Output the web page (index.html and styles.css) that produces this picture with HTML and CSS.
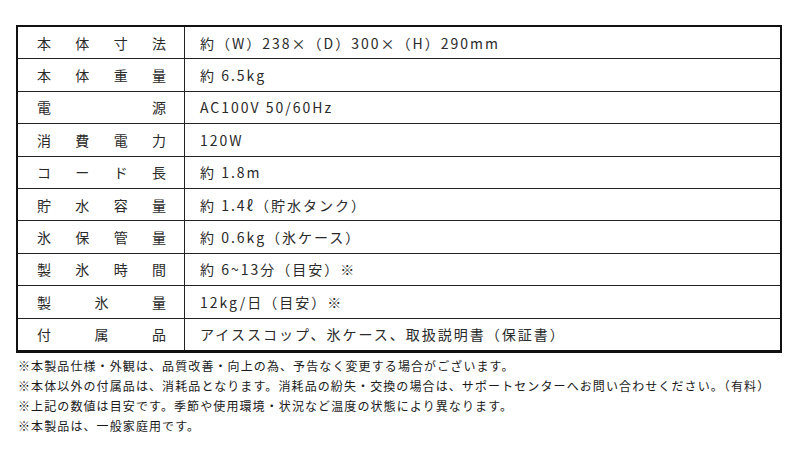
FILE: index.html
```html
<!DOCTYPE html>
<html lang="ja">
<head>
<meta charset="utf-8">
<title>仕様</title>
<link rel="stylesheet" href="styles.css">
</head>
<body>
<div class="spec">
  <div class="row"><div class="label"><span>本</span><span>体</span><span>寸</span><span>法</span></div><div class="value">約（W）238×（D）300×（H）290mm</div></div>
  <div class="row"><div class="label"><span>本</span><span>体</span><span>重</span><span>量</span></div><div class="value">約 6.5kg</div></div>
  <div class="row"><div class="label"><span>電</span><span>源</span></div><div class="value">AC100V 50/60Hz</div></div>
  <div class="row"><div class="label"><span>消</span><span>費</span><span>電</span><span>力</span></div><div class="value">120W</div></div>
  <div class="row"><div class="label"><span>コ</span><span>ー</span><span>ド</span><span>長</span></div><div class="value">約 1.8m</div></div>
  <div class="row"><div class="label"><span>貯</span><span>水</span><span>容</span><span>量</span></div><div class="value">約 1.4ℓ（貯水タンク）</div></div>
  <div class="row"><div class="label"><span>氷</span><span>保</span><span>管</span><span>量</span></div><div class="value">約 0.6kg（氷ケース）</div></div>
  <div class="row"><div class="label"><span>製</span><span>氷</span><span>時</span><span>間</span></div><div class="value">約 6~13分（目安）※</div></div>
  <div class="row"><div class="label"><span>製</span><span>氷</span><span>量</span></div><div class="value">12kg/日（目安）※</div></div>
  <div class="row"><div class="label"><span>付</span><span>属</span><span>品</span></div><div class="value">アイススコップ、氷ケース、取扱説明書（保証書）</div></div>
</div>
<div class="notes">
  <p>※本製品仕様・外観は、品質改善・向上の為、予告なく変更する場合がございます。</p>
  <p>※本体以外の付属品は、消耗品となります。消耗品の紛失・交換の場合は、サポートセンターへお問い合わせください。（有料）</p>
  <p>※上記の数値は目安です。季節や使用環境・状況など温度の状態により異なります。</p>
  <p>※本製品は、一般家庭用です。</p>
</div>
</body>
</html>
```
FILE: styles.css
```css
html, body {
  margin: 0;
  padding: 0;
  background: #fff;
}
body {
  font-family: "Noto Sans CJK JP", "Noto Sans", sans-serif;
  color: #2a2a2a;
}
.spec {
  margin: 25px 0 0 16px;
  width: 766px;
  box-sizing: border-box;
  border: 2px solid #111;
  border-bottom-width: 3px;
}
.row {
  display: flex;
  height: 32.4px;
  box-sizing: border-box;
  border-bottom: 1px solid #222;
}
.row:last-child {
  border-bottom: none;
  height: 31.4px;
}
.label {
  width: 167px;
  box-sizing: border-box;
  padding: 0 18px 0 19px;
  display: flex;
  justify-content: space-between;
  align-items: center;
  border-right: 1px solid #222;
  font-size: 14px;
}
.value {
  flex: 1;
  display: flex;
  align-items: center;
  padding-left: 15px;
  font-size: 14px;
  letter-spacing: 2px;
  white-space: nowrap;
}
.notes {
  margin: 3px 0 0 18px;
  font-size: 12px;
  line-height: 20px;
  letter-spacing: 1.1px;
  color: #1a1a1a;
}
.notes p {
  margin: 0;
  white-space: nowrap;
}
```
